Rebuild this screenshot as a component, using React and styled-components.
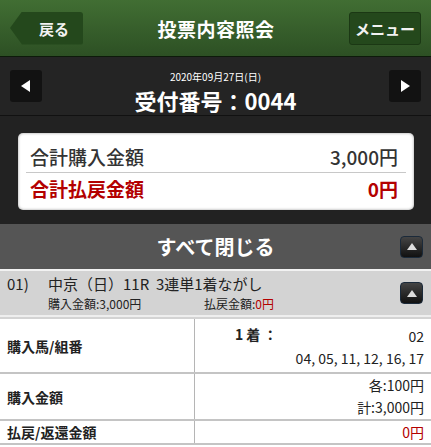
import React from "react";
import styled, { createGlobalStyle } from "styled-components";

const GlobalStyle = createGlobalStyle`
  html, body {
    margin: 0;
    padding: 0;
    background: #222;
  }
  body {
    font-family: "Noto Sans CJK JP", "Noto Sans", sans-serif;
    width: 431px;
    overflow: hidden;
  }
`;

const App = () => {
  return (
    <Page>
      <GlobalStyle />
      <Header>
        <BackButton>
          <BackText>戻る</BackText>
        </BackButton>
        <Title>投票内容照会</Title>
        <MenuButton>メニュー</MenuButton>
      </Header>
      <NavBar>
        <ArrowButton>
          <Tri $dir="left" />
        </ArrowButton>
        <NavCenter>
          <DateText>2020年09月27日(日)</DateText>
          <Receipt>受付番号：0044</Receipt>
        </NavCenter>
        <ArrowButton>
          <Tri $dir="right" />
        </ArrowButton>
      </NavBar>
      <SummaryArea>
        <Card>
          <SumRow>
            <span>合計購入金額</span>
            <span>3,000円</span>
          </SumRow>
          <SumRow $red>
            <span>合計払戻金額</span>
            <span>0円</span>
          </SumRow>
        </Card>
      </SummaryArea>
      <CloseBar>
        <CloseText>すべて閉じる</CloseText>
        <UpButton>
          <UpTri />
        </UpButton>
      </CloseBar>
      <TicketRow>
        <TicketInfo>
          <TicketLine>
            <TicketNo>01)</TicketNo>
            <span>中京（日）11R&nbsp;&nbsp;3連単1着ながし</span>
          </TicketLine>
          <TicketSub>
            <SubItem>購入金額:3,000円</SubItem>
            <SubItem>
              払戻金額:<RedText>0円</RedText>
            </SubItem>
          </TicketSub>
        </TicketInfo>
        <UpButton>
          <UpTri />
        </UpButton>
      </TicketRow>
      <Table>
        <TRow>
          <Label>購入馬/組番</Label>
          <Value $top={6} $bottom={3}>
            <Line>
              <Place>1着：</Place>
              <span>02</span>
            </Line>
            <Line>
              <span />
              <span>04, 05, 11, 12, 16, 17</span>
            </Line>
          </Value>
        </TRow>
        <TRow>
          <Label>購入金額</Label>
          <Value $bottom={1}>
            <Line $right>各:100円</Line>
            <Line $right>計:3,000円</Line>
          </Value>
        </TRow>
        <TRow>
          <Label>払戻/返還金額</Label>
          <Value>
            <Line $right>
              <RedText>0円</RedText>
            </Line>
          </Value>
        </TRow>
      </Table>
    </Page>
  );
};

const Page = styled.div`
  width: 431px;
  height: 447px;
  overflow: hidden;
  background: #fff;
`;

const Header = styled.div`
  height: 57px;
  background: linear-gradient(to bottom, #416e33 0%, #2d5024 100%);
  border-bottom: 1px solid #0d1a0a;
  display: flex;
  align-items: center;
  justify-content: space-between;
  padding: 0 10px;
  box-sizing: border-box;
`;

const BackButton = styled.div`
  width: 73px;
  height: 33px;
  display: flex;
  align-items: center;
  justify-content: flex-end;
  background: #24481c;
  clip-path: polygon(12px 0, 100% 0, 100% 100%, 12px 100%, 0 50%);
  border-radius: 3px;
`;

const BackText = styled.span`
  color: #f2f2f2;
  font-size: 15px;
  font-weight: 700;
  padding-right: 14px;
`;

const Title = styled.div`
  color: #fff;
  font-size: 19px;
  font-weight: 700;
  letter-spacing: 0.5px;
`;

const MenuButton = styled.div`
  width: 72px;
  height: 33px;
  background: #24481c;
  border: 1px solid #1b3814;
  border-radius: 3px;
  box-sizing: border-box;
  color: #f2f2f2;
  font-size: 15px;
  font-weight: 700;
  display: flex;
  align-items: center;
  justify-content: center;
`;

const NavBar = styled.div`
  height: 59px;
  background: #242424;
  border-bottom: 1px solid #111;
  box-shadow: 0 1px 0 #2c2c2c;
  display: flex;
  align-items: center;
  justify-content: space-between;
  padding: 0 10px;
  box-sizing: border-box;
`;

const ArrowButton = styled.div`
  width: 32px;
  height: 32px;
  background: #121212;
  border-radius: 3px;
  display: flex;
  align-items: center;
  justify-content: center;
`;

const Tri = styled.div`
  width: 0;
  height: 0;
  border-top: 6px solid transparent;
  border-bottom: 6px solid transparent;
  ${(p) =>
    p.$dir === "left"
      ? "border-right: 9px solid #fff; margin-right: 2px;"
      : "border-left: 9px solid #fff; margin-left: 2px;"}
`;

const NavCenter = styled.div`
  display: flex;
  flex-direction: column;
  align-items: center;
  color: #fff;
  padding-top: 12px;
`;

const DateText = styled.div`
  font-size: 10px;
  line-height: 15px;
`;

const Receipt = styled.div`
  font-size: 22px;
  line-height: 32px;
  font-weight: 700;
`;

const SummaryArea = styled.div`
  background: #222;
  padding: 17px 17px 14px 18px;
`;

const Card = styled.div`
  background: #fff;
  border-radius: 5px;
  padding: 8px 12px 6px 12px;
  box-shadow: inset 0 0 3px rgba(0, 0, 0, 0.4);
`;

const SumRow = styled.div`
  display: flex;
  justify-content: space-between;
  align-items: center;
  height: 31px;
  font-size: 19px;
  font-weight: ${(p) => (p.$red ? 700 : 500)};
  color: ${(p) => (p.$red ? "#b30000" : "#333")};
  padding: 0 8px 0 4px;
  border-bottom: ${(p) => (p.$red ? "none" : "1px solid #c8c8c8")};
  margin: 0 -4px;
`;

const CloseBar = styled.div`
  height: 45px;
  background: #555;
  border-bottom: 2px solid #f2f2f2;
  display: flex;
  align-items: center;
  justify-content: center;
  position: relative;
`;

const CloseText = styled.div`
  color: #fff;
  font-size: 20px;
  font-weight: 700;
`;

const UpButton = styled.div`
  position: absolute;
  right: 8px;
  top: 50%;
  transform: translateY(-50%);
  width: 23px;
  height: 22px;
  border-radius: 4px;
  background: linear-gradient(to bottom, #444 0%, #111 100%);
  border: 1px solid #1b2a3a;
  box-sizing: border-box;
  display: flex;
  align-items: center;
  justify-content: center;
`;

const UpTri = styled.div`
  width: 0;
  height: 0;
  border-left: 5px solid transparent;
  border-right: 5px solid transparent;
  border-bottom: 7px solid #ddd;
`;

const TicketRow = styled.div`
  position: relative;
  height: 46px;
  background: #d3d3d3;
  border-bottom: 2px solid #eee;
  padding: 2px 0 0 7px;
  box-sizing: border-box;
`;

const TicketInfo = styled.div`
  display: flex;
  flex-direction: column;
  color: #222;
`;

const TicketLine = styled.div`
  display: flex;
  font-size: 15px;
  line-height: 21px;
`;

const TicketNo = styled.span`
  width: 41px;
`;

const TicketSub = styled.div`
  display: flex;
  padding-left: 41px;
  font-size: 12px;
  line-height: 20px;
`;

const SubItem = styled.span`
  width: 156px;
`;

const RedText = styled.span`
  color: #b30000;
`;

const Table = styled.div`
  background: #fff;
  border-top: 2px solid #d3d3d3;
`;

const TRow = styled.div`
  display: flex;
  border-bottom: 2px solid #c4c4c4;
`;

const Label = styled.div`
  width: 187px;
  padding-left: 7px;
  border-right: 1px solid #b5b5b5;
  display: flex;
  align-items: center;
  font-size: 14px;
  font-weight: 700;
  color: #222;
`;

const Value = styled.div`
  flex: 1;
  padding: ${(p) => p.$top || 0}px 7px ${(p) => p.$bottom || 0}px 10px;
  display: flex;
  flex-direction: column;
  font-size: 14px;
  color: #222;
`;

const Line = styled.div`
  display: flex;
  justify-content: ${(p) => (p.$right ? "flex-end" : "space-between")};
  line-height: 22px;
`;

const Place = styled.span`
  font-weight: 700;
  padding-left: 30px;
  letter-spacing: 3px;
  position: relative;
  top: -2px;
`;

export default App;
